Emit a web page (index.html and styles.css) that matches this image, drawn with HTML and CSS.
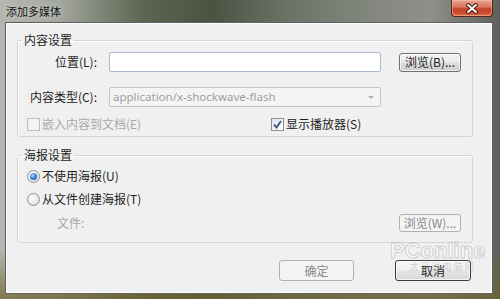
FILE: index.html
```html
<!DOCTYPE html>
<html>
<head>
<meta charset="utf-8">
<link rel="stylesheet" href="styles.css">
</head>
<body>
<div class="window">
  <div class="titlebar">
    <span class="title">添加多媒体</span>
    <div class="close">
      <svg width="14" height="11" viewBox="0 0 14 11">
        <path d="M3 2 L11 9 M11 2 L3 9" stroke="#4a1a12" stroke-width="4" stroke-linecap="round"/>
        <path d="M3 2 L11 9 M11 2 L3 9" stroke="#ffffff" stroke-width="2" stroke-linecap="round"/>
      </svg>
    </div>
  </div>
  <div class="client">
    <fieldset class="group g1">
      <legend>内容设置</legend>
      <div class="row r1">
        <span class="lbl">位置(L):</span>
        <div class="input"></div>
        <div class="btn browse">浏览(B)...</div>
      </div>
      <div class="row r2">
        <span class="lbl">内容类型(C):</span>
        <div class="select">
          <span class="sel-text">application/x-shockwave-flash</span>
          <span class="arrow"></span>
        </div>
      </div>
      <div class="row r3">
        <span class="opt opt-embed is-disabled"><span class="box"></span>嵌入内容到文档(E)</span>
        <span class="opt"><span class="box checked"><svg width="9" height="9" viewBox="0 0 9 9"><path d="M1 4.5 L3.5 7.5 L8 1" fill="none" stroke="#3b4f7d" stroke-width="1.8"/></svg></span>显示播放器(S)</span>
      </div>
    </fieldset>
    <fieldset class="group g2">
      <legend>海报设置</legend>
      <div class="row p1">
        <span class="opt"><span class="radio on"><span class="dot"></span></span>不使用海报(U)</span>
      </div>
      <div class="row p2">
        <span class="opt"><span class="radio"></span>从文件创建海报(T)</span>
      </div>
      <div class="row p3">
        <span class="file-lbl">文件:</span>
        <div class="btn disabled browse2">浏览(W)...</div>
      </div>
    </fieldset>
    <div class="actions">
      <div class="btn disabled big">确定</div>
      <div class="btn big default">取消</div>
    </div>
  </div>
  <div class="watermark">
    <span class="wm-main">PConline</span>
    <span class="wm-sub">太 平 洋 电 脑 网</span>
  </div>
</div>
</body>
</html>
```

FILE: styles.css
```css
html, body {
  margin: 0;
  padding: 0;
}
body {
  width: 500px;
  height: 299px;
  overflow: hidden;
  font-family: "Noto Sans CJK SC", "Noto Sans", sans-serif;
  font-size: 12px;
  color: #1e1e1e;
}
.window {
  position: relative;
  width: 500px;
  height: 299px;
  display: flex;
  flex-direction: column;
  background:
    linear-gradient(180deg, rgba(0,0,0,0) 0px, rgba(0,0,0,0) 250px, rgba(110,100,45,0.75) 299px),
    linear-gradient(90deg, #b4b6b0 0%, #a3a69e 12%, #5d6752 28%, #4a5342 42%, #6b7466 58%, #80857b 72%, #8e908b 86%, #5e605c 100%);
}
.titlebar {
  height: 22px;
  flex: none;
  display: flex;
  justify-content: space-between;
  align-items: flex-start;
}
.title {
  margin-left: 6px;
  margin-top: 3px;
  font-size: 11px;
  line-height: 16px;
  color: #151515;
  text-shadow: 0 0 6px rgba(255,255,255,0.7);
}
.close {
  width: 40px;
  height: 16px;
  margin-right: 7px;
  border: 1px solid #5a2418;
  border-top: none;
  border-radius: 0 0 4px 4px;
  background: linear-gradient(180deg, #e6a592 0%, #d9735c 45%, #c5402a 55%, #cf5034 85%, #e07a58 100%);
  box-shadow: inset 0 0 0 1px rgba(255,200,180,0.45);
  display: flex;
  align-items: center;
  justify-content: center;
}
.close svg { display: block; }
.client {
  box-sizing: border-box;
  height: 272px;
  margin: 0 7px 0 5px;
  border: 1px solid #5e6160;
  box-shadow: inset 1px 1px 0 #ffffff, inset -1px -1px 0 #ffffff;
  background: #f0f0f0;
  padding-top: 9px;
  display: flex;
  flex-direction: column;
}
.group {
  margin: 0 19px 0 11px;
  padding: 0;
  border: 1px solid #d5d5d5;
  border-radius: 3px;
  box-shadow: inset 1px 1px 0 #ffffff;
  min-width: 0;
}
.group legend {
  margin-left: 4px;
  padding: 0 2px;
  font-size: 12px;
  line-height: 16px;
}
.g1 { padding-top: 4px; padding-bottom: 5px; }
.g2 { margin-top: 10px; padding-top: 5px; padding-bottom: 10px; }
.row {
  display: flex;
  align-items: center;
}
.lbl {
  width: 79px;
  text-align: right;
  margin-right: 12px;
  line-height: 16px;
}
.r1 { height: 20px; }
.input {
  box-sizing: border-box;
  width: 272px;
  height: 20px;
  background: #ffffff;
  border: 1px solid #a9bace;
  border-radius: 2px;
}
.btn {
  box-sizing: border-box;
  display: flex;
  align-items: center;
  justify-content: center;
  border: 1px solid #707070;
  border-radius: 3px;
  background: linear-gradient(180deg, #f3f3f3 0%, #ebebeb 48%, #dcdcdc 52%, #cfcfcf 100%);
  box-shadow: inset 0 0 0 1px rgba(255,255,255,0.7);
  line-height: 14px;
  color: #1e1e1e;
}
.browse {
  width: 62px;
  height: 19px;
  margin-left: 18px;
}
.r2 { margin-top: 15px; height: 20px; }
.select {
  box-sizing: border-box;
  width: 272px;
  height: 20px;
  border: 1px solid #c5c5c5;
  border-radius: 2px;
  background: #f4f4f4;
  display: flex;
  align-items: center;
  justify-content: space-between;
  padding: 0 6px 0 3px;
}
.sel-text {
  font-family: "Noto Sans", sans-serif;
  font-size: 11.5px;
  color: #9e9e9e;
  line-height: 14px;
}
.arrow {
  width: 0;
  height: 0;
  border-left: 3px solid transparent;
  border-right: 3px solid transparent;
  border-top: 3px solid #b0b0b0;
}
.r3 { margin-top: 10px; height: 14px; padding-left: 9px; }
.opt {
  display: flex;
  align-items: center;
  line-height: 14px;
}
.opt-embed { width: 244px; }
.is-disabled { color: #a8a8a8; }
.box {
  box-sizing: border-box;
  width: 13px;
  height: 13px;
  margin-right: 2px;
  border: 1px solid #bcbcbc;
  background: #f4f4f4;
  display: flex;
  align-items: center;
  justify-content: center;
}
.box.checked {
  border-color: #8e8f8f;
  background: linear-gradient(135deg, #dfe6ee 0%, #ffffff 100%);
}
.box svg { display: block; }
.p1 { height: 16px; padding-left: 9px; }
.p2 { height: 16px; padding-left: 9px; margin-top: 7px; }
.radio {
  box-sizing: border-box;
  width: 13px;
  height: 13px;
  border-radius: 50%;
  border: 1px solid #929292;
  background: radial-gradient(circle at 40% 35%, #ffffff 0%, #e6e6e6 60%, #cfcfcf 100%);
  margin-right: 2px;
  display: flex;
  align-items: center;
  justify-content: center;
}
.radio .dot {
  width: 7px;
  height: 7px;
  border-radius: 50%;
  background: radial-gradient(circle at 40% 35%, #a8d4ff 0%, #2f78d1 55%, #1a4f9a 100%);
}
.p3 {
  height: 18px;
  margin-top: 7px;
  padding-left: 39px;
  justify-content: space-between;
}
.file-lbl { color: #a8a8a8; line-height: 16px; }
.browse2 {
  width: 62px;
  height: 18px;
  margin-right: 11px;
}
.btn.disabled {
  border-color: #adb2b5;
  background: #f4f4f4;
  box-shadow: none;
  color: #8a8a8a;
}
.actions {
  display: flex;
  justify-content: flex-end;
  margin-top: 17px;
  padding-right: 21px;
}
.big {
  width: 75px;
  height: 21px;
}
.default {
  width: 76px;
  margin-left: 41px;
  border-color: #3c3c3c;
  background: linear-gradient(180deg, #f6f6f6 0%, #efefef 48%, #e3e3e3 52%, #d9d9d9 100%);
}
.watermark {
  position: absolute;
  left: 390px;
  top: 240px;
  display: flex;
  flex-direction: column;
  align-items: center;
  pointer-events: none;
}
.wm-main {
  font-family: "Liberation Sans", sans-serif;
  font-weight: bold;
  font-size: 22px;
  line-height: 22px;
  color: rgba(255,255,255,0.55);
  -webkit-text-stroke: 1px rgba(160,160,160,0.45);
}
.wm-sub {
  font-size: 9px;
  line-height: 10px;
  color: rgba(140,140,140,0.35);
  margin-left: 8px;
}
```
